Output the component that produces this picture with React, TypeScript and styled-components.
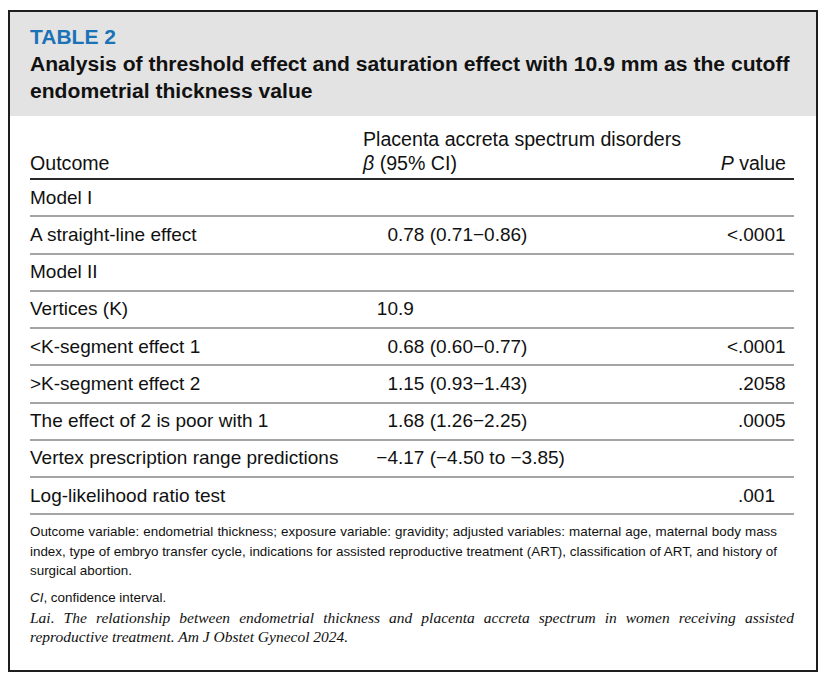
import React from 'react';
import styled, { createGlobalStyle } from 'styled-components';

const GlobalStyle = createGlobalStyle`
  body {
    margin: 0;
    background: #ffffff;
  }
`;

const SANS = '"Liberation Sans", Arial, Helvetica, sans-serif';

const Frame = styled.div`
  box-sizing: border-box;
  width: 810px;
  height: 662px;
  margin: 10px 0 0 8px;
  border: 2px solid #1e1e1e;
  color: #111111;
  font-family: ${SANS};
`;

const Banner = styled.div`
  background: #e3e3e3;
  padding: 11px 20px 12px 20px;
`;

const Label = styled.div`
  font-weight: 700;
  font-size: 21px;
  line-height: 27px;
  color: #1a73b7;
`;

const Title = styled.h1`
  margin: 0;
  font-weight: 700;
  font-size: 21.1px;
  line-height: 27px;
  color: #111111;
`;

const Body = styled.div`
  padding: 0 22px 0 20px;
`;

const Grid = styled.div`
  display: grid;
  grid-template-columns: 333px 1fr 95px;
  box-sizing: border-box;
`;

const HeadRow = styled(Grid)`
  height: 64px;
  align-items: end;
  padding-bottom: 3px;
  border-bottom: 2px solid #2a2a2a;
  font-size: 19.6px;
  line-height: 24px;
`;

const Row = styled(Grid)`
  height: 37.25px;
  align-items: center;
  border-bottom: 2px solid #a5a5a5;
  font-size: 19px;
  line-height: 24px;
`;

const PHead = styled.div`
  text-align: right;
  padding-right: 8px;
`;

const Num = styled.div`
  display: flex;
  white-space: nowrap;
`;

const Whole = styled.span<{ $w: number }>`
  display: inline-block;
  width: ${(p) => p.$w}px;
  text-align: right;
`;

const Notes = styled.div`
  padding: 7px 17px 0 0;
  font-size: 13.4px;
  line-height: 19.5px;
`;

const Line = styled.div<{ $last?: boolean }>`
  text-align: justify;
  text-align-last: ${(p) => (p.$last ? 'left' : 'justify')};
  white-space: nowrap;
`;

const Abbrev = styled.div`
  margin-top: 7.5px;
  font-size: 13.4px;
  line-height: 19.5px;
`;

const Cite = styled.div`
  font-family: 'Liberation Serif', 'Times New Roman', serif;
  font-style: italic;
  font-size: 15.5px;
  line-height: 19.5px;
`;

type Split = [string, string];

interface Item {
  label: string;
  beta?: Split;
  p?: Split;
}

const rows: Item[] = [
  { label: 'Model I' },
  { label: 'A straight-line effect', beta: ['0', '.78 (0.71\u22120.86)'], p: ['<', '.0001'] },
  { label: 'Model II' },
  { label: 'Vertices (K)', beta: ['10', '.9'] },
  { label: '<K-segment effect 1', beta: ['0', '.68 (0.60\u22120.77)'], p: ['<', '.0001'] },
  { label: '>K-segment effect 2', beta: ['1', '.15 (0.93\u22121.43)'], p: ['', '.2058'] },
  { label: 'The effect of 2 is poor with 1', beta: ['1', '.68 (1.26\u22122.25)'], p: ['', '.0005'] },
  { label: 'Vertex prescription range predictions', beta: ['\u22124', '.17 (\u22124.50 to \u22123.85)'] },
  { label: 'Log-likelihood ratio test', p: ['', '.001'] },
];

function Decimal({ value, w }: { value?: Split; w: number }) {
  if (!value) return <div />;
  return (
    <Num>
      <Whole $w={w}>{value[0]}</Whole>
      <span>{value[1]}</span>
    </Num>
  );
}

export default function App() {
  return (
    <>
      <GlobalStyle />
      <Frame>
        <Banner>
          <Label>TABLE 2</Label>
          <Title>
            Analysis of threshold effect and saturation effect with 10.9 mm as the cutoff
            endometrial thickness value
          </Title>
        </Banner>
        <Body>
          <HeadRow>
            <div>Outcome</div>
            <div>
              Placenta accreta spectrum disorders
              <br />
              <i>β</i> (95% CI)
            </div>
            <PHead>
              <i>P</i> value
            </PHead>
          </HeadRow>
          {rows.map((r) => (
            <Row key={r.label}>
              <div>{r.label}</div>
              <Decimal value={r.beta} w={35} />
              <Decimal value={r.p} w={39} />
            </Row>
          ))}
          <Notes>
            <Line>
              Outcome variable: endometrial thickness; exposure variable: gravidity; adjusted
              variables: maternal age, maternal body mass
            </Line>
            <Line>
              index, type of embryo transfer cycle, indications for assisted reproductive treatment
              (ART), classification of ART, and history of
            </Line>
            <Line $last>surgical abortion.</Line>
          </Notes>
          <Abbrev>
            <i>CI</i>, confidence interval.
          </Abbrev>
          <Cite>
            <Line>
              Lai. The relationship between endometrial thickness and placenta accreta spectrum in
              women receiving assisted
            </Line>
            <Line $last>reproductive treatment. Am J Obstet Gynecol 2024.</Line>
          </Cite>
        </Body>
      </Frame>
    </>
  );
}
